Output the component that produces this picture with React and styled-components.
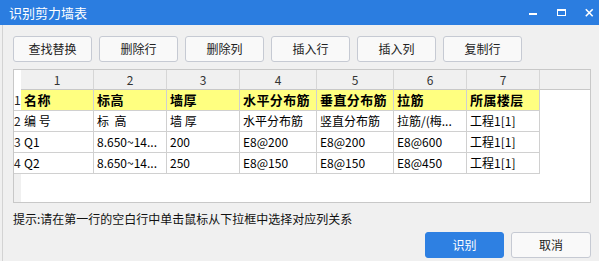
import React from "react";
import styled, { createGlobalStyle } from "styled-components";

const Global = createGlobalStyle`
  html, body { margin: 0; padding: 0; background: #f0f0f0; }
  body { width: 599px; height: 261px; overflow: hidden; }
  * { box-sizing: border-box; }
  #root { width: 599px; height: 261px; }
`;

const FONT = `"Noto Sans CJK SC", "Noto Sans", sans-serif`;

const Window = styled.div`
  width: 599px;
  height: 261px;
  display: flex;
  flex-direction: column;
  background: #f0f0f0;
  font-family: ${FONT};
`;

const TitleBar = styled.div`
  height: 25px;
  flex: 0 0 25px;
  background: #2b7de0;
  display: flex;
  align-items: flex-start;
  justify-content: space-between;
`;

const Title = styled.div`
  color: #ffffff;
  font-size: 13px;
  line-height: 25px;
  padding-left: 9px;
`;

const Controls = styled.div`
  display: flex;
  gap: 19px;
  padding-top: 8px;
  padding-right: 5px;
`;

const Body = styled.div`
  flex: 1;
  margin-left: 2px;
  border-left: 1px solid #d3d3d3;
  padding: 11px 8px 0 10px;
  display: flex;
  flex-direction: column;
`;

const Toolbar = styled.div`
  display: flex;
  gap: 7px;
  height: 26px;
`;

const Button = styled.button`
  width: ${(p) => p.$w || 79}px;
  height: 26px;
  padding: 0;
  border: 1px solid ${(p) => (p.$primary ? "#2e80e2" : "#c6cad3")};
  border-radius: 3px;
  background: ${(p) => (p.$primary ? "#2e80e2" : "#f9f9f9")};
  color: ${(p) => (p.$primary ? "#ffffff" : "#222222")};
  font-family: ${FONT};
  font-size: 12px;
  line-height: 24px;
`;

const Table = styled.div`
  margin-top: 7px;
  height: 134px;
  width: 578px;
  border: 1px solid #c8c8c8;
  background: #ffffff;
  display: flex;
  flex-direction: column;
  overflow: hidden;
`;

const Row = styled.div`
  display: flex;
  height: ${(p) => (p.$head ? 20 : 21)}px;
  flex: 0 0 auto;
`;

const Filler = styled.div`
  display: flex;
  flex: 1;
`;

const RowNum = styled.div`
  width: 7px;
  flex: 0 0 7px;
  background: ${(p) => (p.$grey ? "#f0f0f0" : "#ffffff")};
  border-bottom: ${(p) => (p.$line ? "1px solid #d0d0d0" : "none")};
  font-size: 12px;
  line-height: 20px;
  color: #222;
  white-space: nowrap;
`;

const HeadCell = styled.div`
  width: ${(p) => p.$w}px;
  flex: 0 0 ${(p) => p.$w}px;
  background: #f0f0f0;
  border-right: 1px solid #d6d6d6;
  border-bottom: 1px solid #c8c8c8;
  text-align: center;
  font-size: 12px;
  line-height: 19px;
  color: #333;
`;

const HeadRest = styled.div`
  flex: 1;
  background: #f0f0f0;
  border-bottom: 1px solid #c8c8c8;
`;

const Cell = styled.div`
  width: ${(p) => p.$w}px;
  flex: 0 0 ${(p) => p.$w}px;
  background: ${(p) => (p.$yellow ? "#ffff80" : "#ffffff")};
  border-right: 1px solid #d0d0d0;
  border-bottom: 1px solid #d0d0d0;
  padding-left: 3px;
  font-size: ${(p) => (p.$bold ? 13 : 12)}px;
  font-weight: ${(p) => (p.$bold ? 700 : 400)};
  letter-spacing: ${(p) => (p.$bold ? "0.4px" : "0")};
  line-height: 20px;
  color: #000;
  white-space: pre;
`;

const Hint = styled.div`
  margin-top: 8px;
  font-size: 12px;
  line-height: 16px;
  color: #111;
  white-space: nowrap;
`;

const Footer = styled.div`
  margin-top: 5px;
  display: flex;
  justify-content: flex-end;
  gap: 7px;
`;

const widths = [73, 73, 73, 77, 77, 73, 73];

const rows = [
  { bold: true, yellow: true, cells: ["名称", "标高", "墙厚", "水平分布筋", "垂直分布筋", "拉筋", "所属楼层"] },
  { cells: ["编 号", "标  高", "墙 厚", "水平分布筋", "竖直分布筋", "拉筋/(梅...", "工程1[1]"] },
  { cells: ["Q1", "8.650~14...", "200", "E8@200", "E8@200", "E8@600", "工程1[1]"] },
  { cells: ["Q2", "8.650~14...", "250", "E8@150", "E8@150", "E8@450", "工程1[1]"] },
];

const MinIcon = () => (
  <svg width="9" height="9" viewBox="0 0 9 9">
    <rect x="0" y="5" width="8" height="2" fill="#fff" />
  </svg>
);
const MaxIcon = () => (
  <svg width="9" height="9" viewBox="0 0 9 9" fill="#fff">
    <rect x="0" y="1" width="9" height="2" />
    <rect x="0" y="1" width="1" height="7" />
    <rect x="8" y="1" width="1" height="7" />
    <rect x="0" y="7" width="9" height="1" />
  </svg>
);
const CloseIcon = () => (
  <svg width="9" height="9" viewBox="0 0 9 9">
    <path d="M0.8 1.3 L7.7 8.2 M7.7 1.3 L0.8 8.2" stroke="#fff" strokeWidth="1.6" />
  </svg>
);

export default function App() {
  return (
    <>
      <Global />
      <Window>
        <TitleBar>
          <Title>识别剪力墙表</Title>
          <Controls>
            <MinIcon />
            <MaxIcon />
            <CloseIcon />
          </Controls>
        </TitleBar>
        <Body>
          <Toolbar>
            {["查找替换", "删除行", "删除列", "插入行", "插入列", "复制行"].map((t) => (
              <Button key={t}>{t}</Button>
            ))}
          </Toolbar>
          <Table>
            <Row $head>
              <RowNum />
              {widths.map((w, i) => (
                <HeadCell key={i} $w={w}>{i + 1}</HeadCell>
              ))}
              <HeadRest />
            </Row>
            {rows.map((r, ri) => (
              <Row key={ri}>
                <RowNum $line>{ri + 1}</RowNum>
                {r.cells.map((c, ci) => (
                  <Cell key={ci} $w={widths[ci]} $bold={r.bold} $yellow={r.yellow}>
                    {c}
                  </Cell>
                ))}
              </Row>
            ))}
            <Filler>
              <RowNum $grey />
            </Filler>
          </Table>
          <Hint>提示:请在第一行的空白行中单击鼠标从下拉框中选择对应列关系</Hint>
          <Footer>
            <Button $primary>识别</Button>
            <Button $w={80}>取消</Button>
          </Footer>
        </Body>
      </Window>
    </>
  );
}
